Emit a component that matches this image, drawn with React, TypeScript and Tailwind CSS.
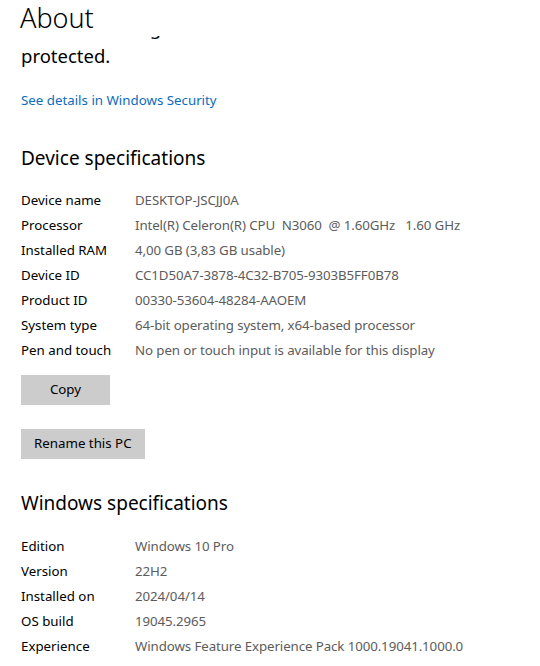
import React from "react";

const device: [string, string][] = [
  ["Device name", "DESKTOP-JSCJJ0A"],
  ["Processor", "Intel(R) Celeron(R) CPU  N3060  @ 1.60GHz   1.60 GHz"],
  ["Installed RAM", "4,00 GB (3,83 GB usable)"],
  ["Device ID", "CC1D50A7-3878-4C32-B705-9303B5FF0B78"],
  ["Product ID", "00330-53604-48284-AAOEM"],
  ["System type", "64-bit operating system, x64-based processor"],
  ["Pen and touch", "No pen or touch input is available for this display"],
];

const windows: [string, string][] = [
  ["Edition", "Windows 10 Pro"],
  ["Version", "22H2"],
  ["Installed on", "2024/04/14"],
  ["OS build", "19045.2965"],
  ["Experience", "Windows Feature Experience Pack 1000.19041.1000.0"],
];

function SpecRows({ rows }: { rows: [string, string][] }) {
  return (
    <div className="flex flex-col">
      {rows.map(([label, value]) => (
        <div key={label} className="flex h-[25px] items-center text-[13.3px]">
          <span className="w-[114px] shrink-0 text-black">{label}</span>
          <span className="whitespace-pre tracking-[-0.1px] text-[#5c5c5c]">{value}</span>
        </div>
      ))}
    </div>
  );
}

export default function App() {
  return (
    <div className="w-[540px] h-[666px] overflow-hidden bg-white pl-[21px] font-['Noto_Sans',sans-serif] text-black">
      {/* Sticky title, content scrolled under it */}
      <div className="relative z-10 h-[36px] bg-white">
        <h1 className="-ml-[1px] text-[27px] font-light leading-[36px]">About</h1>
      </div>
      <p className="-mt-[22px] text-[18.5px] leading-[28px]">
        Your PC is being monitored and
        <br />
        protected.
      </p>

      <a className="mt-[20px] block text-[13.3px] leading-[20px] text-[#0b6cbd]">
        See details in Windows Security
      </a>

      <h2 className="mt-[34px] text-[19px] leading-[28px]">Device specifications</h2>
      <div className="mt-[16px]">
        <SpecRows rows={device} />
      </div>

      <button className="mt-[12px] block h-[30px] w-[89px] bg-[#cccccc] text-[13.3px]">Copy</button>
      <button className="mt-[24px] block h-[30px] px-[13px] bg-[#cccccc] text-[13.3px]">Rename this PC</button>

      <h2 className="mt-[30px] text-[19px] leading-[28px]">Windows specifications</h2>
      <div className="mt-[17px]">
        <SpecRows rows={windows} />
      </div>
    </div>
  );
}
